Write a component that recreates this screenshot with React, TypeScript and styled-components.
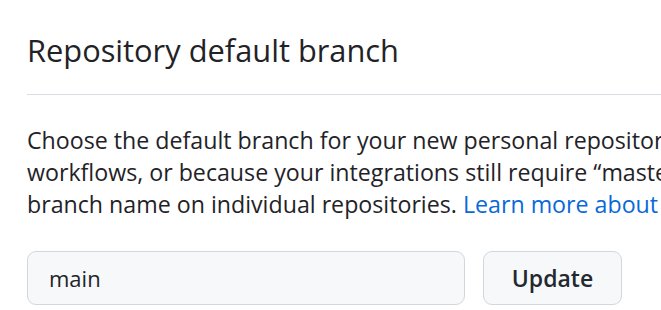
import React from "react";
import styled, { createGlobalStyle } from "styled-components";

const GlobalStyle = createGlobalStyle`
  html, body {
    margin: 0;
    padding: 0;
    background: #ffffff;
    overflow: hidden;
  }
  body {
    font-family: "Open Sans", "Noto Sans", "Liberation Sans", sans-serif;
    color: #1f2328;
  }
`;

const Section = styled.section`
  padding: 27px 0 0 27px;
  width: 1300px;
`;

const Title = styled.h2`
  margin: 0;
  padding-bottom: 21px;
  font-size: 30.8px;
  font-weight: 400;
  line-height: 1.5;
  color: #1f2328;
  border-bottom: 1.5px solid #d8dee4;
`;

const Description = styled.p`
  margin: 29px 0 0;
  font-size: 23.2px;
  line-height: 32px;
  white-space: nowrap;
  color: #1f2328;
`;

const Link = styled.a`
  color: #0969da;
  text-decoration: none;
`;

const Form = styled.form`
  display: flex;
  align-items: center;
  gap: 18px;
  margin-top: 31px;
`;

const BranchInput = styled.input`
  box-sizing: border-box;
  width: 438px;
  height: 54px;
  padding: 0 21px;
  font-family: inherit;
  font-size: 22px;
  color: #1f2328;
  background: #f6f8fa;
  border: 1.5px solid #d0d7de;
  border-radius: 9px;
  outline: none;
`;

const Button = styled.button`
  box-sizing: border-box;
  width: 139px;
  height: 54px;
  font-family: inherit;
  font-size: 23px;
  font-weight: 600;
  color: #24292f;
  background: #f6f8fa;
  border: 1.5px solid #d0d7de;
  border-radius: 9px;
  cursor: pointer;
`;

export default function App(): JSX.Element {
  return (
    <>
      <GlobalStyle />
      <Section>
        <Title>Repository default branch</Title>
        <Description>
          Choose the default branch for your new personal repositories. You
          might want to change the default name due to different
          <br />
          workflows, or because your integrations still require “master” as
          the default branch name. You can always change the default
          <br />
          branch name on individual repositories.{" "}
          <Link href="#">Learn more about default branches.</Link>
        </Description>
        <Form onSubmit={(e) => e.preventDefault()}>
          <BranchInput defaultValue="main" />
          <Button type="submit">Update</Button>
        </Form>
      </Section>
    </>
  );
}
